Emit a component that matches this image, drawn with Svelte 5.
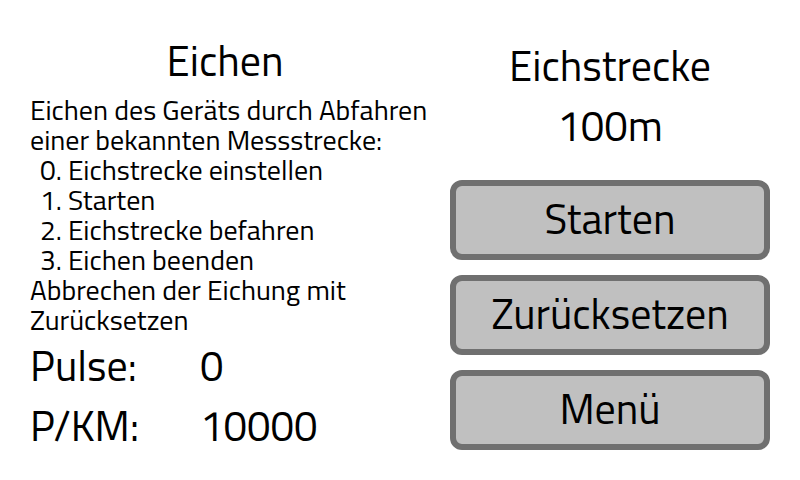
<script>
  const steps = ['Eichstrecke einstellen', 'Starten', 'Eichstrecke befahren', 'Eichen beenden'];
  const distance = '100m';
  const readings = [
    { label: 'Pulse:', value: 0 },
    { label: 'P/KM:', value: 10000 }
  ];
</script>

<main>
  <section class="info">
    <h1>Eichen</h1>
    <div class="text">
      <p>Eichen des Geräts durch Abfahren<br />einer bekannten Messstrecke:</p>
      <ol start="0">
        {#each steps as step, i}
          <li>{i}. {step}</li>
        {/each}
      </ol>
      <p>Abbrechen der Eichung mit<br />Zurücksetzen</p>
    </div>
    <dl>
      {#each readings as r}
        <dt>{r.label}</dt>
        <dd>{r.value}</dd>
      {/each}
    </dl>
  </section>

  <section class="controls">
    <h2>Eichstrecke</h2>
    <p class="distance">{distance}</p>
    <div class="buttons">
      <button type="button">Starten</button>
      <button type="button">Zurücksetzen</button>
      <button type="button">Menü</button>
    </div>
  </section>
</main>

<style>
  :global(body) {
    margin: 0;
    background: #fff;
  }

  main {
    display: grid;
    grid-template-columns: 5fr 4fr;
    gap: 20px;
    padding: 30px;
    color: #000;
    font-family: 'Titillium Web', 'Open Sans', sans-serif;
    font-size: 42px;
    line-height: 60px;
  }

  h1, h2, p, ol, dl, dd {
    margin: 0;
    padding: 0;
    font-weight: 400;
  }

  h1, h2 {
    font-size: 42px;
    text-align: center;
  }

  .info {
    min-width: 0;
  }

  h1 {
    padding-right: 10px;
  }

  .text {
    margin-top: 5px;
    font-size: 28px;
    line-height: 30px;
    white-space: nowrap;
  }

  ol {
    list-style: none;
    padding-left: 10px;
  }

  dl {
    display: grid;
    grid-template-columns: 170px 1fr;
  }

  .controls {
    padding-top: 5px;
    text-align: center;
  }

  .buttons {
    display: flex;
    flex-direction: column;
    gap: 15px;
    margin-top: 25px;
  }

  button {
    height: 80px;
    padding: 0 0 4px;
    border: 6px solid #707070;
    border-radius: 12px;
    background: #c0c0c0;
    color: #000;
    font: inherit;
  }
</style>
